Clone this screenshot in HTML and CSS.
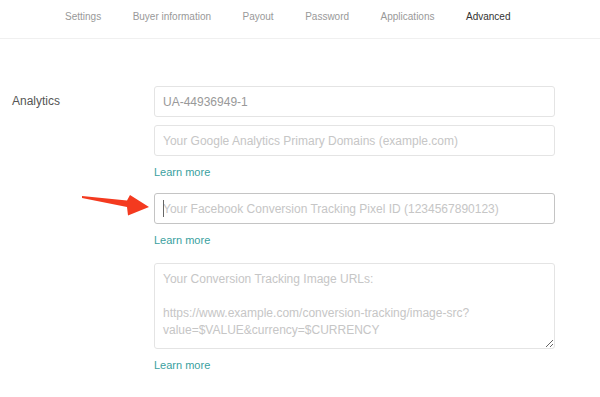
FILE: index.html
```html
<!DOCTYPE html>
<html lang="en">
<head>
  <meta charset="utf-8" />
  <meta name="viewport" content="width=device-width,initial-scale=1" />
  <title>Advanced – Analytics</title>
  <link rel="stylesheet" href="styles.css">
</head>
<body>
  <!-- account tabs -->
  <nav class="tabs">
    <a href="#">Settings</a>
    <a href="#">Buyer information</a>
    <a href="#">Payout</a>
    <a href="#">Password</a>
    <a href="#">Applications</a>
    <a href="#" class="is-active">Advanced</a>
  </nav>

  <main class="form">
    <div class="form-label">Analytics</div>

    <div class="form-fields">
      <!-- Google Analytics -->
      <div class="field">
        <input class="input" type="text" value="UA-44936949-1">
        <input class="input" type="text" placeholder="Your Google Analytics Primary Domains (example.com)">
        <a class="learn" href="#">Learn more</a>
      </div>

      <!-- Facebook pixel (focused) -->
      <div class="field">
        <div class="input-wrap">
          <svg class="pointer" width="76" height="28" viewBox="0 0 76 28" aria-hidden="true">
            <polygon points="4,6 49,10.5 52,5 71,17 50,25.5 49,17 4,8" fill="#f43a1f"/>
          </svg>
          <input class="input is-focus" type="text" placeholder="Your Facebook Conversion Tracking Pixel ID (1234567890123)">
          <span class="caret"></span>
        </div>
        <a class="learn" href="#">Learn more</a>
      </div>

      <!-- image pixels -->
      <div class="field field-area">
        <textarea class="input textarea" placeholder="Your Conversion Tracking Image URLs:&#10;&#10;https://www.example.com/conversion-tracking/image-src?&#10;value=$VALUE&amp;currency=$CURRENCY"></textarea>
        <a class="learn" href="#">Learn more</a>
      </div>
    </div>
  </main>
</body>
</html>
```

FILE: styles.css
```css
/* ── base ── */
*,*::before,*::after{box-sizing:border-box;}

body{
  margin:0;
  background:#fff;
  font-family:"Liberation Sans",Helvetica,Arial,sans-serif;
  -webkit-font-smoothing:antialiased;
}

/* ── tabs ── */
.tabs{
  display:flex;gap:31.5px;
  height:39px;
  padding:11px 0 0 65px;
  border-bottom:1px solid #f0f0f0;
  font-size:10px;line-height:12px;
}
.tabs a{color:#999;text-decoration:none;}
.tabs a.is-active{color:#333;}

/* ── form ── */
.form{
  display:grid;
  grid-template-columns:154px 401px;
  padding-top:47px;
}
.form-label{
  padding-left:12px;
  font-size:12px;line-height:31px;
  color:#555;
}

.form-fields{display:flex;flex-direction:column;gap:13px;}
.field{display:flex;flex-direction:column;gap:8px;}
.field-area{margin-top:2px;}

.input{
  display:block;
  width:401px;height:31px;
  margin:0;padding:0 8px;
  border:1px solid #e4e4e4;border-radius:3px;
  background:#fff;
  font:12px/17px "Liberation Sans",Helvetica,Arial,sans-serif;
  color:#999;
  outline:none;
}
.input::placeholder{color:#c6c6c6;opacity:1;}
.input.is-focus{border-color:#c4c4c4;}

.textarea{height:86px;padding:7px 8px;resize:vertical;}

.learn{
  font-size:11px;line-height:16px;
  color:#3a9fa0;text-decoration:none;
}

/* focused field + annotation arrow */
.input-wrap{position:relative;}
.caret{
  position:absolute;left:9px;top:7px;
  width:1px;height:17px;background:#666;
}
.pointer{position:absolute;left:-76px;top:-3px;}
```
